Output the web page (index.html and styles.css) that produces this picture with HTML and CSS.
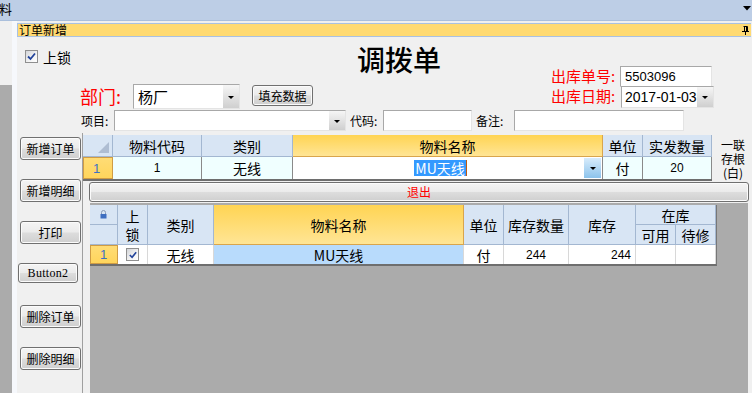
FILE: index.html
```html
<!DOCTYPE html>
<html lang="zh-CN">
<head>
<meta charset="utf-8">
<title>调拨单</title>
<link rel="stylesheet" href="styles.css">
</head>
<body>
<div class="topbar">
  <span class="topbar-text">料</span>
  <svg class="topbar-arrow" width="8" height="5" viewBox="0 0 8 5"><polygon points="0,0 8,0 4,4.5" fill="#000"/></svg>
</div>
<div class="main">
  <div class="leftstrip"><div class="ls-top"></div><div class="ls-bottom"></div></div>
  <div class="sep"></div>
  <div class="panel">
    <div class="ptitle">
      <span>订单新增</span>
      <svg class="pin" width="7" height="9" viewBox="0 0 7 9">
        <path d="M1.5 0.5H5.5M2.5 0.5V5.5M4.5 0.5V5.5M5.5 0.5V5.5M0 5.5H7M3.5 5.5V9" stroke="#000" fill="none" stroke-width="1"/>
      </svg>
    </div>

    <div class="form-top">
      <div class="col-left">
        <div class="lock">
          <span class="chk"><svg width="11" height="11" viewBox="0 0 11 11"><path d="M2 5.5L4.5 8L9 2.5" stroke="#22439a" stroke-width="1.8" fill="none"/></svg></span>
          <span class="lock-text">上锁</span>
        </div>
        <div class="dept-row">
          <span class="dept-label">部门:</span>
          <div class="combo dept-combo"><span class="combo-text">杨厂</span><span class="ddbtn"></span></div>
          <button class="btn fill-btn">填充数据</button>
        </div>
      </div>
      <div class="title">调拨单</div>
      <div class="col-right">
        <div class="r-row r1">
          <span class="rlabel">出库单号:</span>
          <div class="tb no-box">5503096</div>
        </div>
        <div class="r-row r2">
          <span class="rlabel wide">出库日期:</span>
          <div class="combo date-combo"><span class="combo-text date-text">2017-01-03</span><span class="ddbtn"></span></div>
        </div>
      </div>
    </div>

    <div class="form-row2">
      <span class="flabel w33">项目:</span>
      <div class="combo proj-combo"><span class="combo-text"></span><span class="ddbtn"></span></div>
      <span class="flabel w33 gap4">代码:</span>
      <div class="tb code-box"></div>
      <span class="flabel w38 gap4">备注:</span>
      <div class="tb note-box"></div>
    </div>

    <div class="lower">
      <div class="btncol">
        <button class="btn sbtn b1">新增订单</button>
        <button class="btn sbtn b2">新增明细</button>
        <button class="btn sbtn b3">打印</button>
        <button class="btn sbtn b4">Button2</button>
        <button class="btn sbtn b5">删除订单</button>
        <button class="btn sbtn b6">删除明细</button>
      </div>

      <div class="gridarea">
        <div class="grid1-row">
          <div class="g1">
            <div class="c h corner"><svg width="11" height="11" viewBox="0 0 11 11"><polygon points="0,11 11,11 11,0" fill="#aebdd2"/></svg></div>
            <div class="c h">物料代码</div>
            <div class="c h">类别</div>
            <div class="c y">物料名称</div>
            <div class="c h">单位</div>
            <div class="c h">实发数量</div>

            <div class="c rh num">1</div>
            <div class="c d num">1</div>
            <div class="c d">无线</div>
            <div class="c edit">
              <span class="edit-text"><span class="sel">MU天线</span><span class="caret"></span></span>
              <span class="ddbtn blue"></span>
            </div>
            <div class="c d">付</div>
            <div class="c d num">20</div>
          </div>
          <div class="stub"><span class="stub-line">一联</span><span class="stub-line">存根</span><span class="stub-line">(白)</span></div>
        </div>

        <button class="btn exit">退出</button>

        <div class="gray">
          <div class="g2">
            <div class="c h lockc"><svg width="7" height="9" viewBox="0 0 7 9"><path d="M1.5 4V2.5a2 2 0 0 1 4 0V4" stroke="#8a9bb5" stroke-width="1" fill="none"/><rect x="0.5" y="4" width="6" height="4.5" fill="#3f6fc0"/></svg></div>
            <div class="c h span2 twoline"><span>上</span><span>锁</span></div>
            <div class="c h span2">类别</div>
            <div class="c y span2">物料名称</div>
            <div class="c h span2">单位</div>
            <div class="c h span2">库存数量</div>
            <div class="c h span2">库存</div>
            <div class="c h cspan2">在库</div>
            <div class="c h"></div>
            <div class="c h">可用</div>
            <div class="c h">待修</div>

            <div class="c rh num">1</div>
            <div class="c w"><span class="chk small"><svg width="10" height="10" viewBox="0 0 11 11"><path d="M2 5.5L4.5 8L9 2.5" stroke="#22439a" stroke-width="1.8" fill="none"/></svg></span></div>
            <div class="c w">无线</div>
            <div class="c w selrow">MU天线</div>
            <div class="c w">付</div>
            <div class="c w num">244</div>
            <div class="c w num right">244</div>
            <div class="c w"></div>
            <div class="c w"></div>
          </div>
        </div>
      </div>
    </div>
  </div>
</div>
</body>
</html>
```

FILE: styles.css
```css
* { box-sizing: border-box; margin: 0; padding: 0; }
html, body { width: 752px; height: 393px; overflow: hidden; }
body {
  font-family: "Liberation Sans", "Noto Sans CJK SC", sans-serif;
  font-size: 12px;
  color: #000;
  background: #f0f0f0;
}

/* top bar */
.topbar {
  height: 21px;
  background: #bdcee6;
  border-bottom: 1px solid #aabfdc;
  display: flex;
  align-items: flex-start;
  justify-content: space-between;
}
.topbar-text { font-size: 13px; line-height: 18px; margin-left: -1px; font-family: "Noto Sans CJK SC", sans-serif; }
.topbar-arrow { margin-top: 6px; margin-right: 1px; }

.main { display: flex; height: 372px; }
.leftstrip { width: 12px; display: flex; flex-direction: column; }
.ls-top { height: 64px; background: #f0f0f0; }
.ls-bottom { flex: 1; background: #ababab; }
.sep { width: 5px; background: #f6f8fc; }

.panel { flex: 1; display: flex; flex-direction: column; background: #f0f0f0; margin-right: 1px; }
.ptitle {
  margin-top: 2px;
  height: 14px;
  background: #ffda72;
  border: 1px solid #a9c1e2;
  border-right: none;
  display: flex;
  align-items: center;
  justify-content: space-between;
  padding-left: 1px;
  padding-right: 2px;
  font-family: "Noto Sans CJK SC", sans-serif;
  font-size: 12px;
  line-height: 12px;
}
.pin { display: block; }

/* checkbox */
.chk {
  width: 13px; height: 13px;
  border: 1px solid #8f8f8f;
  background: linear-gradient(135deg, #d2d4d8 0%, #f4f4f4 60%, #ffffff 100%);
  display: flex; align-items: center; justify-content: center;
}
.chk.small { width: 13px; height: 13px; }

/* form top */
.form-top { height: 73px; display: flex; }
.col-left { width: 340px; padding-top: 13px; }
.lock { display: flex; align-items: center; height: 13px; padding-left: 8px; }
.lock-text { margin-left: 5px; font-size: 14px; line-height: 14px; font-family: "Noto Sans CJK SC", sans-serif; }
.dept-row { margin-top: 21px; display: flex; height: 25px; padding-left: 63px; }
.dept-label { width: 53px; color: #ff0000; font-size: 18px; line-height: 25px; font-family: "Noto Sans CJK SC", sans-serif; }
.dept-combo { width: 107px; height: 25px; }
.dept-combo .combo-text { font-size: 15px; padding-left: 4px; font-family: "Noto Sans CJK SC", sans-serif; }
.fill-btn { margin-left: 12px; margin-top: 1px; width: 61px; height: 21px; }

.title {
  width: 194px;
  padding-top: 6px;
  font-size: 28px;
  line-height: 32px;
  font-family: "Noto Sans CJK SC", sans-serif;
  font-weight: 500;
}
.col-right { padding-top: 29px; display: flex; flex-direction: column; }
.r-row { display: flex; }
.r1 { height: 20px; }
.r2 { height: 22px; }
.rlabel { width: 69px; color: #ff0000; font-size: 15px; line-height: 20px; font-family: "Noto Sans CJK SC", sans-serif; white-space: nowrap; }
.rlabel.wide { width: 70px; }
.no-box { width: 92px; height: 21px; font-size: 13px; line-height: 19px; padding-left: 4px; }
.date-combo { width: 93px; height: 22px; }
.date-text { font-size: 14px; padding-left: 3px; }

/* text boxes & combos */
.tb {
  background: #fff;
  border: 1px solid;
  border-color: #a8a8a8 #e4e4e4 #e4e4e4 #a8a8a8;
}
.combo {
  background: #fff;
  border: 1px solid;
  border-color: #a8a8a8 #e4e4e4 #e4e4e4 #a8a8a8;
  display: flex;
  align-items: stretch;
}
.combo-text { flex: 1; display: flex; align-items: center; white-space: nowrap; overflow: hidden; }
.ddbtn {
  width: 16px;
  background: linear-gradient(#f6f6f6, #cfcfcf);
  display: flex; align-items: center; justify-content: center;
  flex-shrink: 0;
}
.ddbtn::after {
  content: "";
  border-left: 3px solid transparent;
  border-right: 3px solid transparent;
  border-top: 3px solid #000;
  margin-top: 1px;
}
.ddbtn.blue { background: linear-gradient(#d8ecfb, #8cc3ec); }

.form-row2 { display: flex; height: 21px; padding-left: 64px; }
.flabel { font-size: 12px; line-height: 21px; font-family: "Noto Sans CJK SC", sans-serif; }
.w33 { width: 33px; }
.w38 { width: 38px; }
.gap4 { margin-left: 4px; }
.proj-combo { width: 232px; height: 21px; }
.code-box { width: 89px; height: 21px; }
.note-box { width: 170px; height: 21px; }

/* buttons */
.btn {
  font-family: "Noto Sans CJK SC", sans-serif;
  font-size: 12px;
  line-height: 1;
  color: #000;
  border: 1px solid #707070;
  border-radius: 3px;
  background: linear-gradient(#f4f4f4 0%, #ebebeb 48%, #dddddd 52%, #cfcfcf 100%);
  box-shadow: inset 0 0 0 1px #fbfbfb;
  display: flex;
  align-items: center;
  justify-content: center;
  cursor: default;
}

.lower { margin-top: 2px; flex: 1; display: flex; }
.btncol {
  width: 66px;
  border-right: 1px solid #a0a0a0;
  display: flex;
  flex-direction: column;
  padding-left: 3px;
  padding-top: 4px;
}
.sbtn { width: 61px; height: 23px; }
.b2, .b3 { margin-top: 19px; }
.b4 { margin-top: 19px; margin-left: -2px; width: 60px; height: 20px; font-family: "Liberation Serif", serif; font-size: 12px; letter-spacing: 0.3px; }
.b5 { margin-top: 22px; }
.b6 { margin-top: 19px; }

.gridarea { flex: 1; display: flex; flex-direction: column; padding-top: 2px; }
.grid1-row { display: flex; align-items: flex-start; }

/* grid cells */
.c {
  display: flex;
  align-items: center;
  justify-content: center;
  font-family: "Noto Sans CJK SC", sans-serif;
  font-size: 14px;
  line-height: 1;
  white-space: nowrap;
  overflow: hidden;
}
.h { background: #d8e5f4; border-right: 1px solid #a3b7d1; border-bottom: 1px solid #a3b7d1; }
.y { background: linear-gradient(#ffd453, #ffe595); border-right: 1px solid #d9a54c; border-bottom: 1px solid #d9a54c; }
.rh {
  background: linear-gradient(#ffdc75, #ffd55c);
  border: 1px solid #cf9c44;
  justify-content: flex-start;
  padding-left: 9px;
  color: #3d72c3;
}
.num { font-family: "Liberation Sans", sans-serif; font-size: 12px; }
.rh.num { font-size: 13px; }

.g1 {
  display: grid;
  grid-template-columns: 30px 89px 91px 310px 40px 69px;
  grid-template-rows: 22px 22px;
  border-bottom: 2px solid #6e6e6e;
}
.corner { justify-content: flex-start; align-items: flex-start; padding: 7px 0 0 15px; }
.d { background: #f0ffff; border-right: 1px solid #8a8a8a; }
.edit { background: #fff; border-right: 1px solid #8a8a8a; justify-content: space-between; align-items: stretch; padding: 1px 1px 1px 0; }
.edit-text { flex: 1; display: flex; align-items: center; justify-content: center; padding-left: 4px; }
.sel { background: #3399ff; color: #fff; font-size: 14px; line-height: 16px; padding: 0 1px; }
.caret { width: 1px; height: 16px; background: #c05a10; }
.edit .ddbtn { width: 17px; }

.stub {
  margin-left: 8px;
  margin-top: 3px;
  width: 26px;
  display: flex;
  flex-direction: column;
  align-items: center;
  font-family: "Noto Sans CJK SC", sans-serif;
  font-size: 12px;
}
.stub-line { height: 14px; line-height: 14px; white-space: nowrap; }

.exit {
  margin-top: 1px;
  margin-left: 6px;
  width: 660px;
  height: 20px;
  color: #ff0000;
}

.gray {
  margin-top: 1px;
  margin-left: 7px;
  width: 658px;
  flex: 1;
  background: #ababab;
  padding-top: 2px;
}
.g2 {
  display: grid;
  width: 627px;
  grid-template-columns: 28px 30px 66px 250px 40px 65px 67px 40px 40px;
  grid-template-rows: 20px 20px 19px;
  border-right: 1px solid #777;
  border-bottom: 2px solid #6e6e6e;
}
.span2 { grid-row: span 2; }
.cspan2 { grid-column: span 2; }
.twoline { flex-direction: column; gap: 4px; }
.twoline span { display: block; height: 14px; line-height: 14px; }
.lockc { justify-content: flex-start; padding-left: 10px; }
.w { background: #fff; border-right: 1px solid #d8d8d8; }
.selrow { background: #b8dbfc; }
.right { justify-content: flex-end; padding-right: 4px; }
```
